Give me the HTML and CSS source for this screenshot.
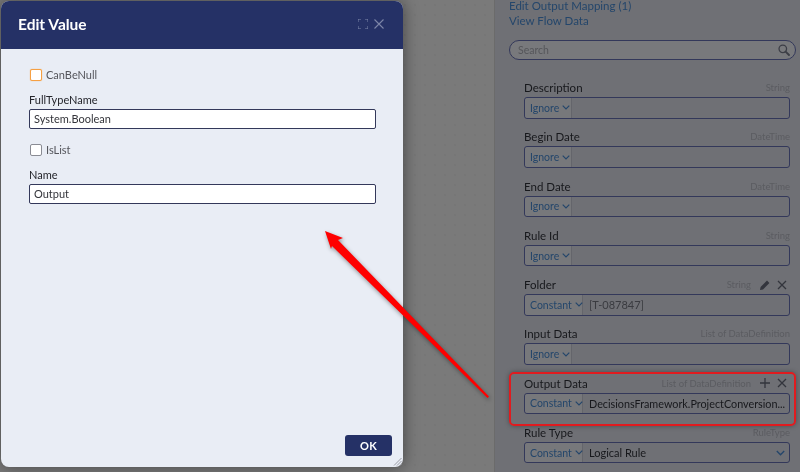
FILE: index.html
```html
<!DOCTYPE html>
<html lang="en">
<head>
<meta charset="utf-8">
<title>Edit Value</title>
<link rel="stylesheet" href="styles.css">
</head>
<body>
<div class="page">
  <div class="canvas"></div>
  <aside class="panel">
    <a class="link">Edit Output Mapping (1)</a>
    <a class="link">View Flow Data</a>
    <div class="search">
      <span>Search</span>
      <svg width="12" height="12" viewBox="0 0 14 14"><circle cx="5.6" cy="5.6" r="4.4" fill="none" stroke="#3c3e46" stroke-width="1.5"/><path d="M8.9 8.9L12.8 12.8" stroke="#3c3e46" stroke-width="2.2" stroke-linecap="round"/></svg>
    </div>
    <div class="rows">
      <div class="row">
        <div class="row-head"><span class="row-label">Description</span><span class="row-type">String</span></div>
        <div class="field"><span class="mode">Ignore<svg class="chev" viewBox="0 0 8 5"><path d="M.7.7L4 4 7.3.7"/></svg></span></div>
      </div>
      <div class="row">
        <div class="row-head"><span class="row-label">Begin Date</span><span class="row-type">DateTime</span></div>
        <div class="field"><span class="mode">Ignore<svg class="chev" viewBox="0 0 8 5"><path d="M.7.7L4 4 7.3.7"/></svg></span></div>
      </div>
      <div class="row">
        <div class="row-head"><span class="row-label">End Date</span><span class="row-type">DateTime</span></div>
        <div class="field"><span class="mode">Ignore<svg class="chev" viewBox="0 0 8 5"><path d="M.7.7L4 4 7.3.7"/></svg></span></div>
      </div>
      <div class="row">
        <div class="row-head"><span class="row-label">Rule Id</span><span class="row-type">String</span></div>
        <div class="field"><span class="mode">Ignore<svg class="chev" viewBox="0 0 8 5"><path d="M.7.7L4 4 7.3.7"/></svg></span></div>
      </div>
      <div class="row">
        <div class="row-head row-head-act"><span class="row-label">Folder</span><span class="row-type">String</span>
          <svg class="act" viewBox="0 0 12 12"><path d="M1 11l.6-3L8 1.6 10.4 4 4 10.4z" fill="#33353d"/></svg>
          <svg class="act" viewBox="0 0 12 12"><path d="M2 2l8 8M10 2l-8 8" stroke="#33353d" stroke-width="1.3" fill="none"/></svg>
        </div>
        <div class="field"><span class="mode mode-wide">Constant<svg class="chev" viewBox="0 0 8 5"><path d="M.7.7L4 4 7.3.7"/></svg></span><span class="value">[T-087847]</span></div>
      </div>
      <div class="row">
        <div class="row-head"><span class="row-label">Input Data</span><span class="row-type">List of DataDefinition</span></div>
        <div class="field"><span class="mode">Ignore<svg class="chev" viewBox="0 0 8 5"><path d="M.7.7L4 4 7.3.7"/></svg></span></div>
      </div>
      <div class="row">
        <div class="row-head row-head-act"><span class="row-label">Output Data</span><span class="row-type">List of DataDefinition</span>
          <svg class="act" viewBox="0 0 12 12"><path d="M6 1v10M1 6h10" stroke="#33353d" stroke-width="1.3" fill="none"/></svg>
          <svg class="act" viewBox="0 0 12 12"><path d="M2 2l8 8M10 2l-8 8" stroke="#33353d" stroke-width="1.3" fill="none"/></svg>
        </div>
        <div class="field"><span class="mode mode-wide">Constant<svg class="chev" viewBox="0 0 8 5"><path d="M.7.7L4 4 7.3.7"/></svg></span><span class="value value-dark value-long">DecisionsFramework.ProjectConversion...</span></div>
      </div>
      <div class="row">
        <div class="row-head"><span class="row-label">Rule Type</span><span class="row-type">RuleType</span></div>
        <div class="field"><span class="mode mode-wide">Constant<svg class="chev" viewBox="0 0 8 5"><path d="M.7.7L4 4 7.3.7"/></svg></span><span class="value value-dark">Logical Rule</span><svg class="chev chev-end" viewBox="0 0 8 5"><path d="M.7.7L4 4 7.3.7"/></svg></div>
      </div>
    </div>
  </aside>
</div>

<div class="highlight"></div>

<section class="dialog">
  <header class="dialog-head">
    <h1>Edit Value</h1>
    <svg class="head-icon" viewBox="0 0 10 10"><path d="M0 3V0h3M7 0h3v3M10 7v3H7M3 10H0V7" fill="none" stroke="#7d86a8" stroke-width="1"/></svg>
    <svg class="head-icon head-close" viewBox="0 0 10 10"><path d="M.5.5l9 9M9.5.5l-9 9" fill="none" stroke="#7d86a8" stroke-width="1.1"/></svg>
  </header>
  <div class="dialog-body">
    <label class="check"><span class="box box-focus"></span>CanBeNull</label>
    <div class="text-field"><span class="text-label">FullTypeName</span><div class="input">System.Boolean</div></div>
    <label class="check check-second"><span class="box"></span>IsList</label>
    <div class="text-field"><span class="text-label">Name</span><div class="input">Output</div></div>
  </div>
  <footer class="dialog-foot"><button class="ok">OK</button></footer>
  <svg class="grip" viewBox="0 0 9 9"><path d="M1 8.5L8.5 1M4 8.5L8.5 4M7 8.5L8.5 7" stroke="#9a9ca5" stroke-width="1" fill="none"/></svg>
</section>

<svg class="arrow" width="800" height="472" viewBox="0 0 800 472">
  <polygon points="325,231 343,238 338,240 489,396.5 487.5,398 332,246 331,249" fill="#fe0000"/>
</svg>
</body>
</html>
```
FILE: styles.css
```css
* { box-sizing: border-box; }
html, body { margin: 0; padding: 0; }
body {
  width: 800px;
  height: 472px;
  overflow: hidden;
  position: relative;
  font-family: Lato, "Liberation Sans", sans-serif;
  background: #797979;
}
.page { display: flex; width: 800px; height: 472px; filter: blur(.35px); }
.canvas {
  flex: none;
  width: 495px;
  background-color: #7a7a7a;
  background-image: radial-gradient(circle, #707070 0.5px, transparent 0.8px);
  background-size: 10px 10px;
  border-right: 1px solid #6b6b6b;
}
.panel {
  flex: 1;
  min-width: 0;
  background: #6f7075;
  padding: 0 4px 0 14px;
  display: flex;
  flex-direction: column;
  gap: 3px;
  overflow: hidden;
}
.link {
  flex: none;
  font-size: 11.5px;
  line-height: 12px;
  color: #24466b;
  height: 12px;
}
.search {
  flex: none;
  margin-top: 10px;
  height: 20px;
  width: 287px;
  border: 1px solid #33385a;
  border-radius: 10px;
  background: #78797c;
  display: flex;
  align-items: center;
  justify-content: space-between;
  padding: 0 5px 0 8px;
  font-size: 10.5px;
  color: #55565a;
}
.rows { flex: none; margin: 17px 6px 0 15px; display: flex; flex-direction: column; }
.row { flex: none; height: 49.25px; display: flex; flex-direction: column; }
.row-head {
  flex: none;
  height: 17px;
  padding-bottom: 2px;
  display: flex;
  align-items: center;
  gap: 5px;
}
.row-head-act { padding-right: 2px; }
.row-head-act .row-type { margin-right: 3px; }
.row-label { font-size: 11.5px; color: #17181c; margin-right: auto; }
.row-type { font-size: 9.5px; color: #5b5c61; }
.act { width: 12px; height: 12px; }
.field {
  flex: none;
  height: 21.5px;
  border: 1px solid #33385a;
  border-radius: 3px;
  display: flex;
  align-items: center;
  background: #6f7075;
}
.mode {
  flex: none;
  width: 47px;
  height: 100%;
  background: #77787b;
  border-right: 1px solid #64656b;
  padding-left: 5px;
  display: flex;
  align-items: center;
  gap: 3px;
  font-size: 10.5px;
  color: #24466b;
  border-radius: 3px 0 0 3px;
}
.mode-wide { width: 58px; }
.chev { width: 8px; height: 5px; fill: none; stroke: #24466b; stroke-width: 1.2; flex: none; }
.chev-end { margin: 0 4px 0 auto; width: 9px; height: 6px; }
.value {
  min-width: 0;
  font-size: 11px;
  color: #3a3b40;
  padding-left: 6px;
  white-space: nowrap;
  flex: 1;
}
.value-dark { color: #17181c; }
.value-long { font-size: 10.8px; }
.highlight {
  position: absolute;
  left: 509px;
  top: 372px;
  width: 287px;
  height: 54px;
  border: 2px solid #e01b1f;
  border-radius: 5px;
  box-shadow: 0 0 5px rgba(0, 0, 0, .35);
}
.dialog {
  position: absolute;
  left: 1px;
  top: 1px;
  width: 402px;
  height: 466px;
  background: #e9edf5;
  border-radius: 8px;
  box-shadow: 0 0 16px rgba(0, 0, 0, .45);
  display: flex;
  flex-direction: column;
  filter: blur(.3px);
}
.dialog-head {
  height: 48px;
  background: #253166;
  border-radius: 8px 8px 0 0;
  display: flex;
  align-items: center;
  padding: 0 19px 0 17px;
  color: #fff;
}
.dialog-head h1 {
  margin: 0 auto 0 0;
  font-size: 15.5px;
  font-weight: 700;
  position: relative;
  top: -1px;
}
.head-icon { width: 10px; height: 10px; position: relative; top: -1px; }
.head-close { margin-left: 6px; }
.dialog-body { flex: 1; padding: 19px 27px 0 28px; display: flex; flex-direction: column; }
.check {
  display: flex;
  align-items: center;
  gap: 4px;
  height: 13px;
  font-size: 11px;
  color: #55565c;
  padding-left: 1px;
}
.check-second { margin-top: 14px; }
.box {
  width: 12px;
  height: 12px;
  background: #fff;
  border: 1px solid #8a8c94;
  border-radius: 2px;
}
.box-focus { border-color: #f6a043; box-shadow: 0 0 1px #f6a043; }
.text-field { margin-top: 12px; }
.text-label { display: block; height: 16px; line-height: 14px; font-size: 11px; color: #24252b; }
.input {
  height: 20px;
  line-height: 18px;
  border: 1px solid #33385a;
  border-radius: 2px;
  background: #fff;
  padding: 0 4px;
  font-size: 11px;
  color: #33343a;
}
.dialog-foot { display: flex; justify-content: flex-end; padding: 0 11px 11px 0; }
.ok {
  width: 47px;
  height: 21px;
  border: 0;
  border-radius: 3px;
  background: #253166;
  color: #fff;
  font: 700 11px Lato, "Liberation Sans", sans-serif;
  letter-spacing: .4px;
}
.grip { position: absolute; right: 1px; bottom: 1px; width: 9px; height: 9px; }
.arrow {
  position: absolute;
  left: 0;
  top: 0;
  pointer-events: none;
  filter: drop-shadow(1px 2px 2px rgba(0, 0, 0, .4));
}
```
